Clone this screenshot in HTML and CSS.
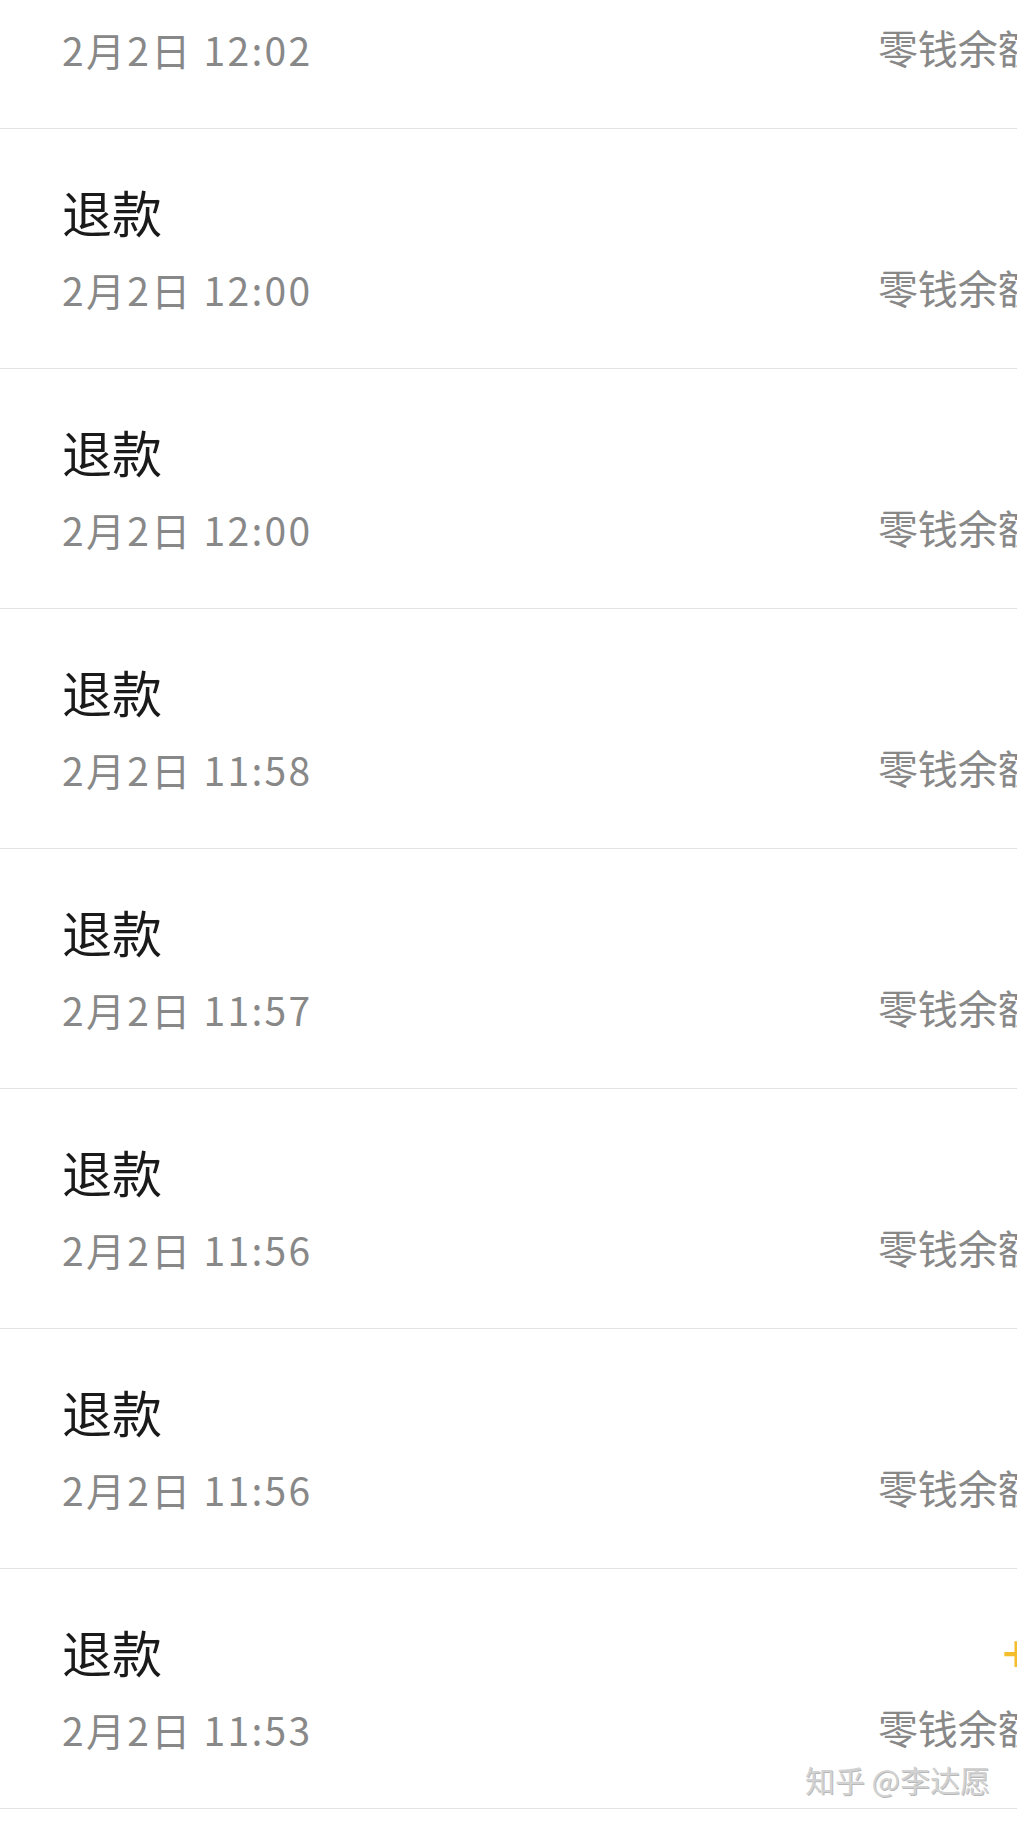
FILE: index.html
```html
<!DOCTYPE html>
<html lang="zh-CN">
<head>
    <meta charset="UTF-8">
    <meta name="viewport" content="width=device-width, initial-scale=1.0">
    <title>零钱明细</title>
    <link rel="stylesheet" href="styles.css">
</head>
<body>
    <ul class="bill-list">
        <li class="bill">
            <div class="bill-info">
                <div class="bill-title">退款</div>
                <div class="bill-time">2月2日 12:02</div>
            </div>
            <div class="bill-money">
                <div class="bill-amount">+5.00</div>
                <div class="bill-balance">零钱余额¥96.45</div>
            </div>
        </li>
        <li class="bill">
            <div class="bill-info">
                <div class="bill-title">退款</div>
                <div class="bill-time">2月2日 12:00</div>
            </div>
            <div class="bill-money">
                <div class="bill-amount">+5.00</div>
                <div class="bill-balance">零钱余额¥91.45</div>
            </div>
        </li>
        <li class="bill">
            <div class="bill-info">
                <div class="bill-title">退款</div>
                <div class="bill-time">2月2日 12:00</div>
            </div>
            <div class="bill-money">
                <div class="bill-amount">+5.00</div>
                <div class="bill-balance">零钱余额¥86.45</div>
            </div>
        </li>
        <li class="bill">
            <div class="bill-info">
                <div class="bill-title">退款</div>
                <div class="bill-time">2月2日 11:58</div>
            </div>
            <div class="bill-money">
                <div class="bill-amount">+5.00</div>
                <div class="bill-balance">零钱余额¥81.45</div>
            </div>
        </li>
        <li class="bill">
            <div class="bill-info">
                <div class="bill-title">退款</div>
                <div class="bill-time">2月2日 11:57</div>
            </div>
            <div class="bill-money">
                <div class="bill-amount">+5.00</div>
                <div class="bill-balance">零钱余额¥76.45</div>
            </div>
        </li>
        <li class="bill">
            <div class="bill-info">
                <div class="bill-title">退款</div>
                <div class="bill-time">2月2日 11:56</div>
            </div>
            <div class="bill-money">
                <div class="bill-amount">+5.00</div>
                <div class="bill-balance">零钱余额¥71.45</div>
            </div>
        </li>
        <li class="bill">
            <div class="bill-info">
                <div class="bill-title">退款</div>
                <div class="bill-time">2月2日 11:56</div>
            </div>
            <div class="bill-money">
                <div class="bill-amount">+5.00</div>
                <div class="bill-balance">零钱余额¥66.45</div>
            </div>
        </li>
        <li class="bill">
            <div class="bill-info">
                <div class="bill-title">退款</div>
                <div class="bill-time">2月2日 11:53</div>
            </div>
            <div class="bill-money">
                <div class="bill-amount">+10.00</div>
                <div class="bill-balance">零钱余额¥61.45</div>
            </div>
        </li>
        <li class="bill">
            <div class="bill-info">
                <div class="bill-title">退款</div>
                <div class="bill-time">2月2日 11:50</div>
            </div>
            <div class="bill-money">
                <div class="bill-amount">+5.00</div>
                <div class="bill-balance">零钱余额¥51.45</div>
            </div>
        </li>
    </ul>

    <div class="watermark">知乎 @李达愿</div>
</body>
</html>
```

FILE: styles.css
```css
:root {
    --text-main: #1a1a1a;
    --text-sub: #888888;
    --line: #e3e3e3;
    --income: #f3bd2b;
}

* {
    margin: 0;
    padding: 0;
    box-sizing: border-box;
}

body {
    font-family: "Noto Sans CJK SC", "Noto Sans", sans-serif;
    background: #ffffff;
    color: var(--text-main);
    overflow: hidden;
}

.bill-list {
    list-style: none;
    width: 1200px;
    margin-top: -111px;
}

.bill {
    height: 240px;
    display: flex;
    justify-content: space-between;
    padding: 52px 40px 0 62px;
    border-bottom: 1px solid var(--line);
}

.bill-title {
    font-size: 50px;
    line-height: 60px;
}

.bill-time {
    margin-top: 24px;
    font-size: 39px;
    line-height: 48px;
    letter-spacing: 2.3px;
    color: var(--text-sub);
}

.bill-money {
    text-align: right;
}

.bill-amount {
    font-size: 50px;
    line-height: 60px;
    font-weight: 500;
    color: var(--income);
}

.bill-balance {
    margin-top: 22px;
    font-size: 40px;
    line-height: 48px;
    color: var(--text-sub);
}

.watermark {
    position: absolute;
    right: 27px;
    top: 1757px;
    font-size: 30px;
    color: #d2d2d2;
    text-shadow: 1px 1px 0 rgba(0, 0, 0, 0.28), -1px -1px 0 #ffffff;
}
```
